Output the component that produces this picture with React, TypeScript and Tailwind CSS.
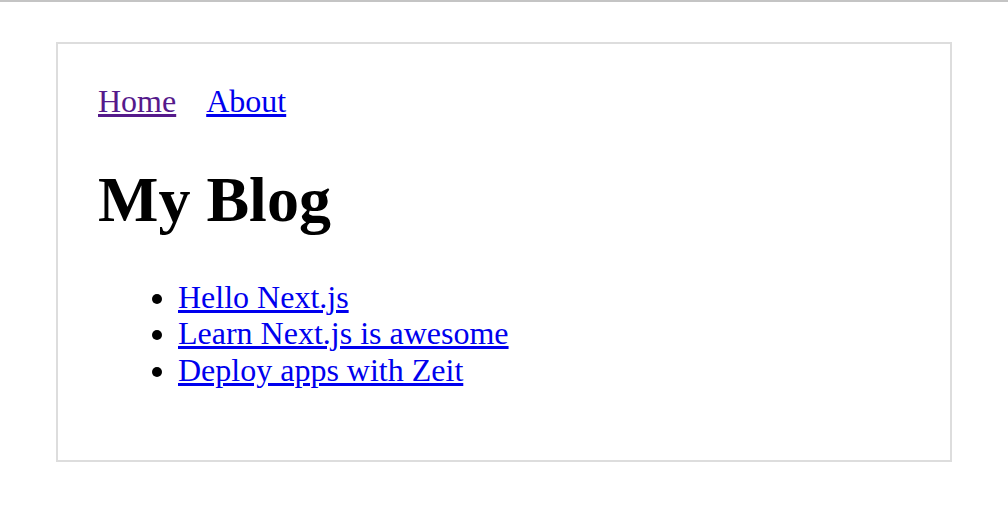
export default function App() {
  return (
    <div className="min-h-screen bg-white font-['Liberation_Serif',serif] text-black">
      {/* top edge */}
      <div className="h-[2px] bg-[#c4c4c4]" />

      <div className="mx-[56px] mt-[40px] border-2 border-[#dddddd] px-[40px] pt-[39px] pb-[42px] text-[32px] leading-[36.5px]">
        <nav className="flex">
          <a href="#" className="mr-[30px] text-[#551a8b] underline">
            Home
          </a>
          <a href="#" className="text-[#0000ee] underline">
            About
          </a>
        </nav>

        <h1 className="my-[43px] text-[64px] font-bold leading-[73px]">My Blog</h1>

        <ul className="mb-[30px] list-disc pl-[80px]">
          <li>
            <a href="#" className="text-[#0000ee] underline">
              Hello Next.js
            </a>
          </li>
          <li>
            <a href="#" className="text-[#0000ee] underline">
              Learn Next.js is awesome
            </a>
          </li>
          <li>
            <a href="#" className="text-[#0000ee] underline">
              Deploy apps with Zeit
            </a>
          </li>
        </ul>
      </div>
    </div>
  );
}
